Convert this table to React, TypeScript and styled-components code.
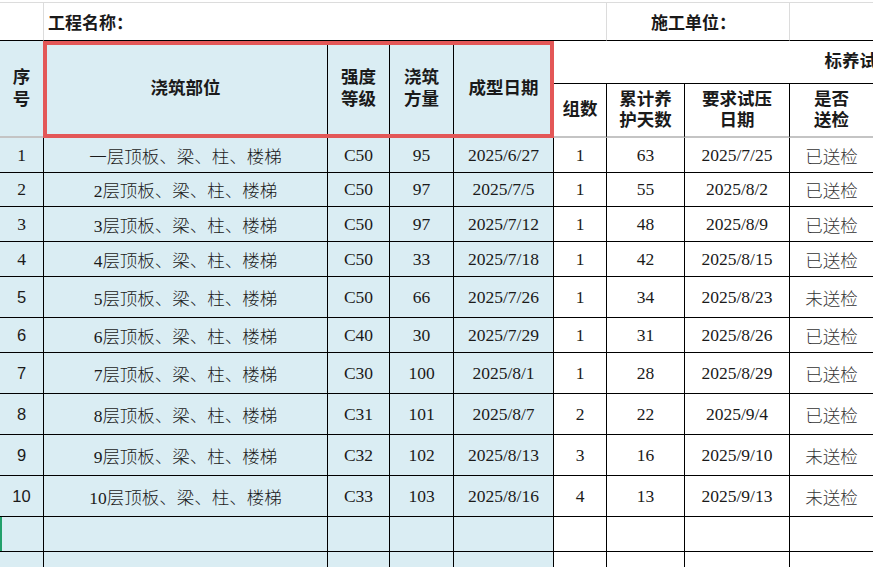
import React from "react";
import styled, { createGlobalStyle, css } from "styled-components";

const Global = createGlobalStyle`
  html, body { margin: 0; padding: 0; background: #ffffff; }
  body { font-family: "Liberation Serif", "Noto Sans CJK SC", serif; }
`;

const COLS = [44, 284, 62, 64, 100, 53, 78, 105, 84, 109, 109, 109];
const ROW_H = [35, 34, 35, 35, 41, 35, 41, 41, 41, 41, 35, 35];
const TINT = "#daedf3";

const Viewport = styled.div`
  width: 873px;
  height: 567px;
  overflow: hidden;
  background: #fff;
`;

const Sheet = styled.div`
  position: relative;
  display: grid;
  grid-template-columns: ${COLS.map((c) => `${c}px`).join(" ")};
  grid-template-rows: 39px 43px 54px ${ROW_H.map((h) => `${h}px`).join(" ")};
  padding-top: 2px;
  width: max-content;
  color: #1a1a1a;
`;

type CellProps = { $span?: number; $rows?: number; $tint?: boolean };

const Cell = styled.div<CellProps>`
  box-sizing: border-box;
  display: flex;
  align-items: center;
  justify-content: center;
  text-align: center;
  white-space: nowrap;
  overflow: hidden;
  grid-column: span ${(p) => p.$span ?? 1};
  grid-row: span ${(p) => p.$rows ?? 1};
  border-right: 1px solid #000;
  border-bottom: 1px solid #000;
  background: ${(p) => (p.$tint ? TINT : "#fff")};
  font-size: 17.5px;
`;

const TitleCell = styled(Cell)<{ $indent?: number }>`
  border-top: 1px solid #dcdcdc;
  border-right-color: #dcdcdc;
  font-weight: 700;
  font-size: 17px;
  ${(p) =>
    p.$indent !== undefined &&
    css`
      justify-content: flex-start;
      padding-left: ${p.$indent}px;
    `}
`;

const HeadCell = styled(Cell)<{ $last?: boolean }>`
  font-weight: 700;
  font-size: 17.5px;
  line-height: 21.5px;
  ${(p) =>
    p.$last &&
    css`
      border-bottom: 2px solid #c4c4c4;
    `}
`;

const DataCell = styled(Cell)<{ $sans?: boolean; $mark?: boolean; $muted?: boolean }>`
  font-weight: 300;
  ${(p) =>
    p.$sans &&
    css`
      font-family: "Liberation Sans", "Noto Sans CJK SC", sans-serif;
      font-size: 16.5px;
    `}
  ${(p) =>
    p.$mark &&
    css`
      box-shadow: inset 2px 0 0 #22a06b;
    `}
  ${(p) =>
    p.$muted &&
    css`
      color: #333;
    `}
`;

const Highlight = styled.div`
  position: absolute;
  left: 43px;
  top: 41px;
  width: 511px;
  height: 97px;
  box-sizing: border-box;
  border: 4px solid #e35757;
  pointer-events: none;
`;

type Row = {
  no: string;
  part: string;
  grade: string;
  vol: string;
  date: string;
  groups: string;
  days: string;
  test: string;
  sent: string;
};

const rows: Row[] = [
  { no: "1", part: "一层顶板、梁、柱、楼梯", grade: "C50", vol: "95", date: "2025/6/27", groups: "1", days: "63", test: "2025/7/25", sent: "已送检" },
  { no: "2", part: "2层顶板、梁、柱、楼梯", grade: "C50", vol: "97", date: "2025/7/5", groups: "1", days: "55", test: "2025/8/2", sent: "已送检" },
  { no: "3", part: "3层顶板、梁、柱、楼梯", grade: "C50", vol: "97", date: "2025/7/12", groups: "1", days: "48", test: "2025/8/9", sent: "已送检" },
  { no: "4", part: "4层顶板、梁、柱、楼梯", grade: "C50", vol: "33", date: "2025/7/18", groups: "1", days: "42", test: "2025/8/15", sent: "已送检" },
  { no: "5", part: "5层顶板、梁、柱、楼梯", grade: "C50", vol: "66", date: "2025/7/26", groups: "1", days: "34", test: "2025/8/23", sent: "未送检" },
  { no: "6", part: "6层顶板、梁、柱、楼梯", grade: "C40", vol: "30", date: "2025/7/29", groups: "1", days: "31", test: "2025/8/26", sent: "已送检" },
  { no: "7", part: "7层顶板、梁、柱、楼梯", grade: "C30", vol: "100", date: "2025/8/1", groups: "1", days: "28", test: "2025/8/29", sent: "已送检" },
  { no: "8", part: "8层顶板、梁、柱、楼梯", grade: "C31", vol: "101", date: "2025/8/7", groups: "2", days: "22", test: "2025/9/4", sent: "已送检" },
  { no: "9", part: "9层顶板、梁、柱、楼梯", grade: "C32", vol: "102", date: "2025/8/13", groups: "3", days: "16", test: "2025/9/10", sent: "未送检" },
  { no: "10", part: "10层顶板、梁、柱、楼梯", grade: "C33", vol: "103", date: "2025/8/16", groups: "4", days: "13", test: "2025/9/13", sent: "未送检" },
];

const EXTRA = 3;

export default function App() {
  return (
    <Viewport>
      <Global />
      <Sheet>
        <TitleCell />
        <TitleCell $span={5} $indent={4}>工程名称：</TitleCell>
        <TitleCell $span={2} $indent={44}>施工单位：</TitleCell>
        <TitleCell $span={1 + EXTRA} />

        <HeadCell $rows={2} $tint $last>序<br />号</HeadCell>
        <HeadCell $rows={2} $tint $last>浇筑部位</HeadCell>
        <HeadCell $rows={2} $tint $last>强度<br />等级</HeadCell>
        <HeadCell $rows={2} $tint $last>浇筑<br />方量</HeadCell>
        <HeadCell $rows={2} $tint $last>成型日期</HeadCell>
        <HeadCell $span={4 + EXTRA}>标养试块情况</HeadCell>
        <HeadCell $last>组数</HeadCell>
        <HeadCell $last>累计养<br />护天数</HeadCell>
        <HeadCell $last>要求试压<br />日期</HeadCell>
        <HeadCell $last>是否<br />送检</HeadCell>
        {Array.from({ length: EXTRA }).map((_, k) => (
          <HeadCell key={k} $last />
        ))}

        {rows.map((r, i) => (
          <React.Fragment key={r.no}>
            <DataCell $tint $sans={i >= 4}>{r.no}</DataCell>
            <DataCell $tint>{r.part}</DataCell>
            <DataCell $tint>{r.grade}</DataCell>
            <DataCell $tint>{r.vol}</DataCell>
            <DataCell $tint>{r.date}</DataCell>
            <DataCell>{r.groups}</DataCell>
            <DataCell>{r.days}</DataCell>
            <DataCell>{r.test}</DataCell>
            <DataCell $muted>{r.sent}</DataCell>
            {Array.from({ length: EXTRA }).map((_, k) => (
              <DataCell key={k} />
            ))}
          </React.Fragment>
        ))}

        {[0, 1].map((i) => (
          <React.Fragment key={`blank-${i}`}>
            <DataCell $tint $mark={i === 0} />
            <DataCell $tint />
            <DataCell $tint />
            <DataCell $tint />
            <DataCell $tint />
            <DataCell />
            <DataCell />
            <DataCell />
            <DataCell />
            {Array.from({ length: EXTRA }).map((_, k) => (
              <DataCell key={k} />
            ))}
          </React.Fragment>
        ))}

        <Highlight />
      </Sheet>
    </Viewport>
  );
}
